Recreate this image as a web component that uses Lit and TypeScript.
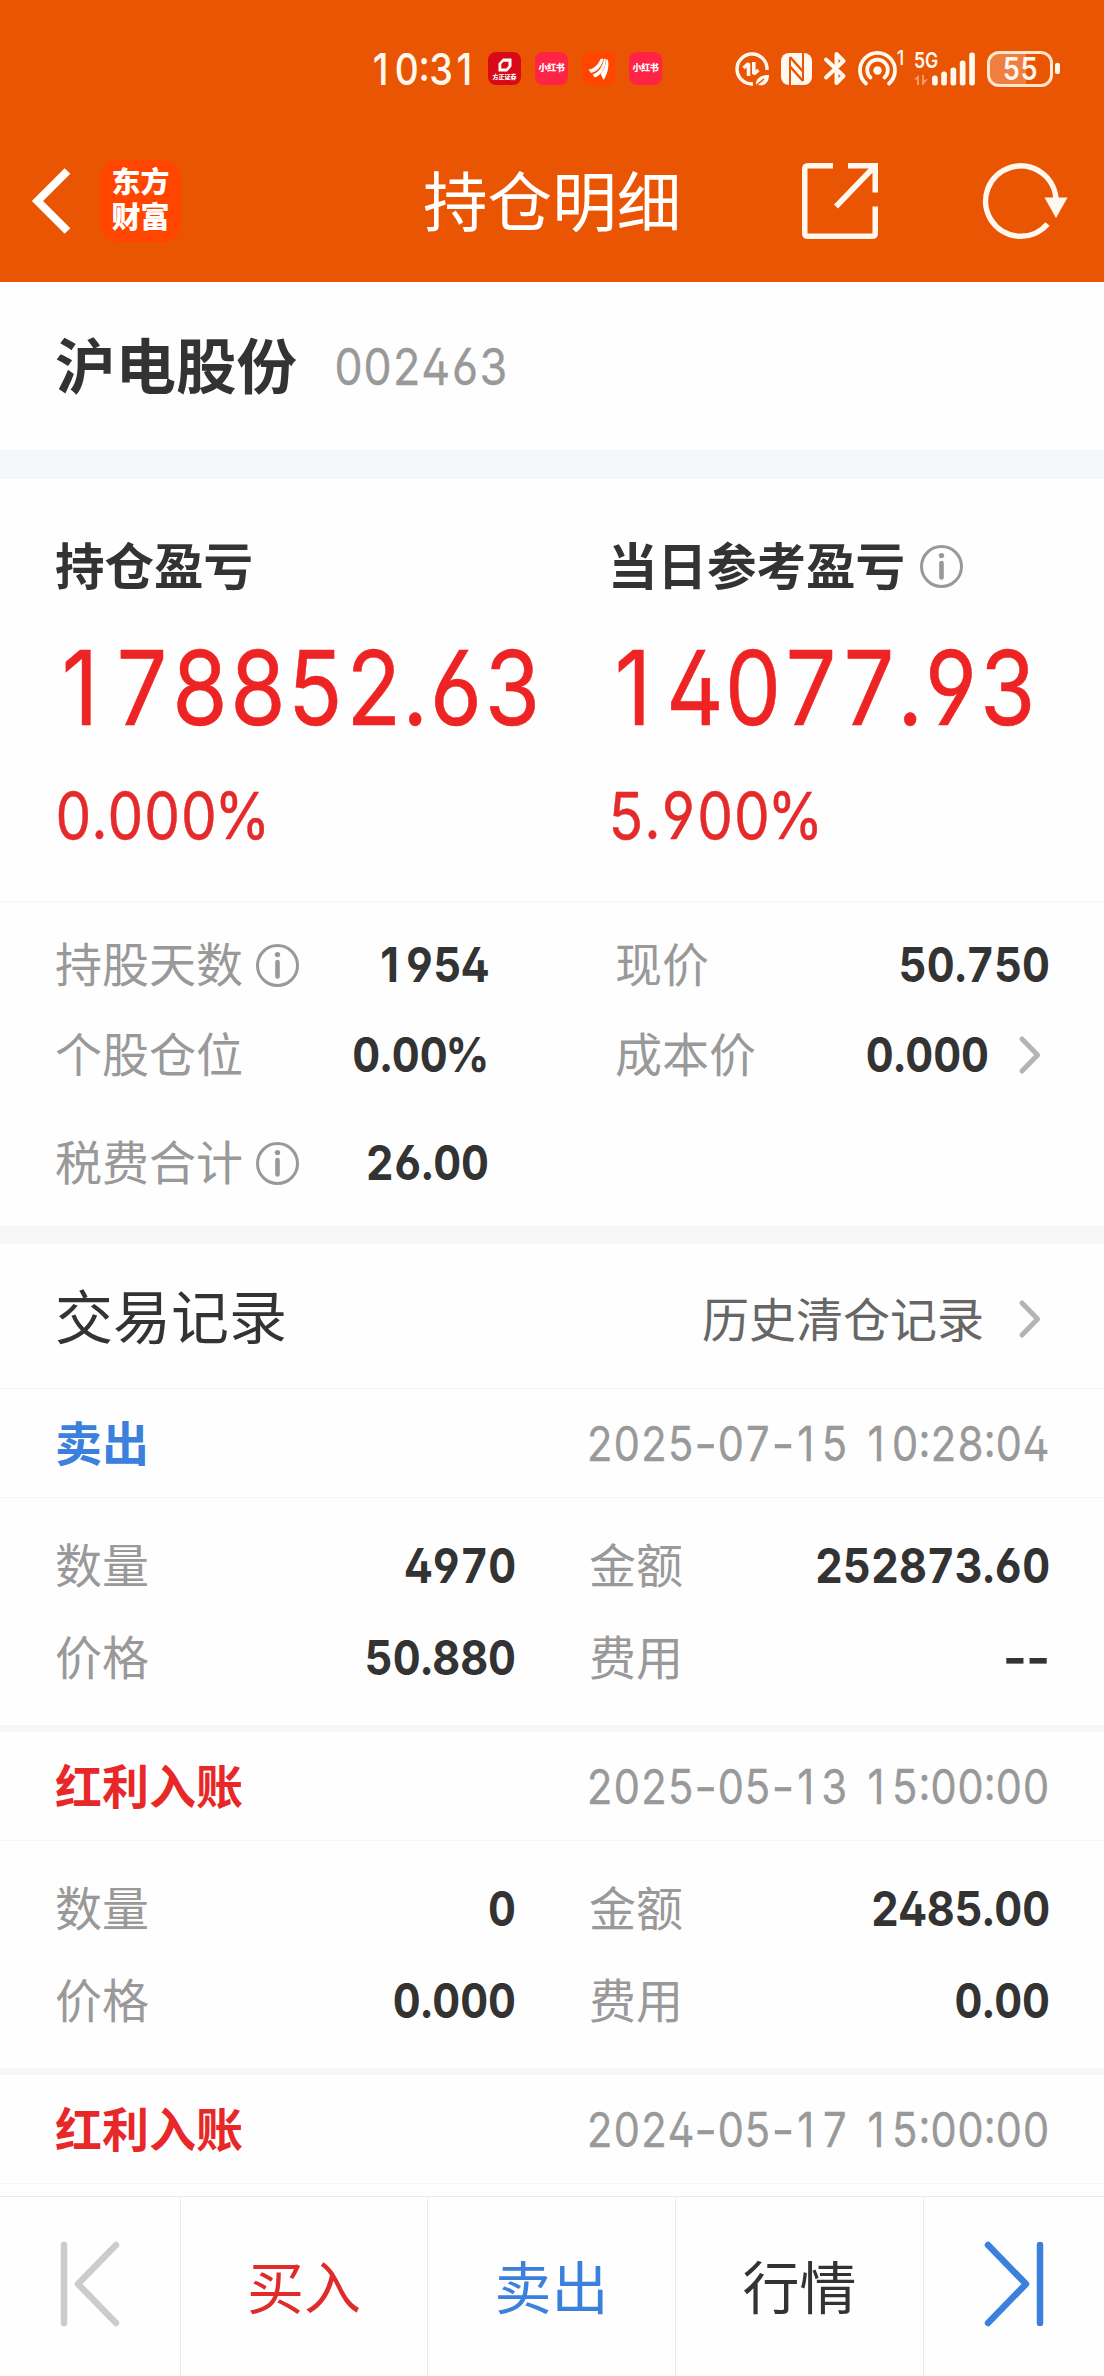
import { LitElement, html, css, svg, nothing } from "lit";
import { customElement, property } from "lit/decorators.js";

const shared = css`
  * { box-sizing: border-box; }
  svg { display: block; flex: none; overflow: visible; }
  .num {
    display: inline-block;
    white-space: nowrap;
    font-feature-settings: "tnum", "cv02", "cv03", "cv04";
    transform: scaleX(0.872);
    transform-origin: left center;
  }
  .num.end { transform-origin: right center; }
  .num i { font-style: normal; display: inline-block; text-align: center; font-feature-settings: normal; }
  .one { width: 0.65em; padding-right: 0.09em; }
  .dash { width: 0.54em; transform: scaleX(1.2); }
  .num .pc { font-feature-settings: "tnum"; margin-left: -0.05em; }
`;

/* Digits share one cell width; "1", "-" and "%" take their own glyph settings. */
const figures = (text: string) =>
  Array.from(text).map((c) =>
    c === "1" ? html`<i class="one">1</i>` : c === "-" ? html`<i class="dash">-</i>` : c === "%" ? html`<i class="pc">%</i>` : c,
  );

const infoIcon = html`<svg width="43" height="43" viewBox="0 0 43 43" fill="none">
  <circle cx="21.5" cy="21.5" r="20" stroke="#999" stroke-width="3" />
  <circle cx="21.5" cy="10.6" r="2.7" fill="#999" />
  <path d="M21.5 18V32.5" stroke="#999" stroke-width="4.6" stroke-linecap="round" />
</svg>`;

const chevron = html`<svg width="22" height="38" viewBox="0 0 22 38" fill="none">
  <path d="M3 3L18.6 19L3 35" stroke="#b4b4b4" stroke-width="5" stroke-linecap="round" stroke-linejoin="round" />
</svg>`;

@customElement("status-bar")
class StatusBar extends LitElement {
  static styles = [shared, css`
    :host { display: flex; align-items: center; height: 137px; padding: 0 44px 0 370px; color: #fff8ee; }
    .time { font-size: 43.5px; font-weight: 500; width: 118px; line-height: 60px; }
    .time.num { transform: scaleX(0.87); }
    .app {
      width: 33px; height: 33px; margin-right: 14px; border-radius: 8px; flex: none; color: #fff;
      display: flex; flex-direction: column; align-items: center; justify-content: center;
      white-space: nowrap; overflow: hidden;
    }
    .founder { background: #d80a18; }
    .founder span { font-size: 6px; line-height: 7px; font-weight: 900; margin-top: 1px; }
    .red { background: #ff2345; font-size: 9px; font-weight: 900; letter-spacing: -0.3px; }
    .east { background: #ff4500; }
    .right { display: flex; align-items: center; margin-left: auto; }
    .gap { margin-left: 12px; }
    .net { display: flex; height: 36px; }
    .slot { font-size: 20px; line-height: 20px; width: 17px; height: 35px; transform: translate(-1px, -3px) scaleX(.9); font-weight: 500; }
    .gen { width: 26px; display: flex; flex-direction: column; }
    .gen b { font-size: 22px; line-height: 18px; font-weight: 600; transform: scaleX(0.8); transform-origin: left; }
    .gen svg { margin-top: 6px; }
    .signal { margin-left: -8px; }
    .battery {
      width: 66px; height: 36px; border: 3px solid #ffe6cc; border-radius: 12px; margin-left: 12px;
      background: linear-gradient(90deg, #f07e40 0 39px, transparent 39px);
      font-size: 31.5px; font-weight: 600; line-height: 30px;
      display: flex; justify-content: center; background-origin: border-box;
    }
    .battery .num { transform-origin: center; transform: scaleX(.86); }
    .cap { width: 5px; height: 11px; border-radius: 2px; background: #fff8ee; margin-left: 2px; }
  `];

  render() {
    return html`
      <span class="time num">${figures("10:31")}</span>
      <div class="app founder">
        <svg width="14" height="14" viewBox="0 0 14 14"><path d="M5 .5H13.5V8.5L9 13.5H.5V5.5ZM5.5 3.8L3.3 6V10.5H8L10.5 8V3.8Z" fill="#fff" fill-rule="evenodd" /></svg>
        <span>方正证券</span>
      </div>
      <div class="app red">小红书</div>
      <div class="app east">
        <svg width="21" height="22" viewBox="0 0 21 22" fill="#fff">
          <path d="M.5 11.500C5 11.500 10 7 12.500 1L15.300 .5C15 7 9 14 3 15Z" />
          <path d="M4.500 16.800C11 14 15 8 15.900 1L17.700 .8C18.300 8 14 17 7 19.500Z" />
          <path d="M12.500 15.500C16.500 12 18 6 18.400 1L20 2C21.500 9 19 17 15.500 22Z" />
        </svg>
      </div>
      <div class="app red">小红书</div>
      <div class="right">
        <svg width="34" height="34" viewBox="0 0 34 34" fill="none" stroke="#fff8ee">
          <path d="M18 32A15 15 0 1 1 32 18" stroke-width="3.400" />
          <path d="M8.500 16L13.500 11.500V24M18.800 10V22L23.500 18" stroke-width="3.600" stroke-linejoin="bevel" />
          <path d="M21 33C20.500 26 26 23 34 23C34 30 30 34.500 24 33Z" fill="#fff8ee" stroke="none" />
          <path d="M20.500 34L29 27" stroke="#ea5504" stroke-width="1.500" />
        </svg>
        <svg class="gap" width="31" height="32" viewBox="0 0 31 32">
          <rect width="31" height="32" rx="8" fill="#fff8ee" />
          <path d="M9 4V32M22 0V28" stroke="#ea5504" stroke-width="2" />
          <path d="M9 4L22 18.500M9 13.500L22 28" fill="none" stroke="#ea5504" stroke-width="2.400" />
        </svg>
        <svg class="gap" width="22" height="35" viewBox="0 0 22 35" fill="none">
          <path d="M2 8.500L19.500 25L12.500 32V3L19.500 10L2 26.500" stroke="#fff8ee" stroke-width="4" stroke-linecap="round" stroke-linejoin="round" />
        </svg>
        <svg class="gap" width="39" height="35" viewBox="0 0 39 35" fill="none" stroke="#fff8ee" stroke-linecap="round">
          <path d="M8 32.500A17.500 17.500 0 1 1 31 32.500" stroke-width="3.800" />
          <path d="M12.500 26.500A10.300 10.300 0 1 1 26.500 26.500" stroke-width="3.800" />
          <circle cx="19.500" cy="19.500" r="4.200" fill="#fff8ee" stroke="none" />
        </svg>
        <div class="net">
          <span class="slot">1</span>
          <div class="gen">
            <b>5G</b>
            <svg width="14" height="10" viewBox="0 0 14 10"><path d="M0 4L5 0V10H3V5ZM8 0H10V5L14 4L9 10H8Z" fill="#f79a66" /></svg>
          </div>
        </div>
        <svg class="signal" width="43" height="34" viewBox="0 0 43 34" fill="#fff8ee">
          ${[[0, 10], [9.2, 14], [18.5, 18], [27.8, 25], [37.2, 33]].map(([x, h]) => svg`<rect x=${x} y=${33.5 - h} width="5.700" height=${h} rx="2.500" />`)}
        </svg>
        <div class="battery"><span class="num">55</span></div>
        <span class="cap"></span>
      </div>
    `;
  }
}

@customElement("nav-header")
class NavHeader extends LitElement {
  static styles = [shared, css`
    :host { display: grid; grid-template-columns: 423px 1fr auto; align-items: center; height: 128px; padding-right: 36px; color: #fff; }
    .left { display: flex; align-items: center; padding-left: 32px; }
    .badge {
      width: 81px; height: 82px; margin-left: 29px; border-radius: 18px; background: #ff4500;
      font-size: 29px; line-height: 34.5px; font-weight: 900; text-align: center; padding-top: 6px;
    }
    .title { font-size: 64.6px; line-height: 80px; white-space: nowrap; padding-top: 4px; }
    .actions { display: flex; align-items: center; gap: 105px; }
  `];

  render() {
    return html`
      <div class="left">
        <svg width="39" height="66" viewBox="0 0 39 66" fill="none"><path d="M35.500 3L5.500 33L35.500 63" stroke="#fff" stroke-width="8" stroke-linejoin="miter" /></svg>
        <div class="badge">东方<br />财富</div>
      </div>
      <span class="title">持仓明细</span>
      <div class="actions">
        <svg width="76" height="76" viewBox="0 0 76 76" fill="none" stroke="#fff8ee" stroke-width="5.500">
          <path d="M31 2.750H6Q2.750 2.750 2.750 6V70Q2.750 73.250 6 73.250H70Q73.250 73.250 73.250 70V43.500" />
          <path d="M46 2.750H73.250V29.500M73 3L34 43.500" />
        </svg>
        <svg width="85" height="76" viewBox="0 0 85 76" fill="none">
          <path d="M64.500 61A35.200 35.200 0 1 1 73 38V34" stroke="#fff8ee" stroke-width="5.500" />
          <path d="M61.500 34.500H84.500L73 55Z" fill="#fff8ee" />
        </svg>
      </div>
    `;
  }
}

@customElement("pair-row")
class PairRow extends LitElement {
  @property() label = "";
  @property() value = "";
  @property({ type: Boolean }) info = false;
  @property({ type: Boolean }) link = false;

  static styles = [shared, css`
    :host { display: flex; align-items: center; height: 60px; line-height: 60px; }
    .label { font-size: 47px; color: #999; margin-right: 13px; white-space: nowrap; }
    .value { font-size: 48px; font-weight: 700; color: #333; margin-left: auto; }
    .value.num { transform: scaleX(0.9); }
    .more { padding: 0 9px 0 30px; }
  `];

  render() {
    return html`
      <span class="label">${this.label}</span>
      ${this.info ? infoIcon : nothing}
      <span class="value num end">${figures(this.value)}</span>
      ${this.link ? html`<span class="more">${chevron}</span>` : nothing}
    `;
  }
}

@customElement("trade-record")
class TradeRecord extends LitElement {
  @property() kind = "";
  @property() tone = "";
  @property() time = "";
  @property({ attribute: false }) cells: string[][] = [];

  static styles = [shared, css`
    :host { display: block; flex: none; }
    .head { display: flex; align-items: center; justify-content: space-between; height: 109px; padding: 0 54px 0 55px; border-bottom: 1px solid #f5f5f7; }
    .kind { font-size: 47px; font-weight: 700; padding-top: 2px; }
    .sell { color: #3a80dc; }
    .bonus { color: #e82828; }
    .time { font-size: 47.5px; word-spacing: 5.5px; -webkit-text-stroke: 0.3px currentColor; color: #999; }
    .time.num { transform: scaleX(0.88); }
    .body { display: grid; grid-template-columns: 461px 461px; column-gap: 73px; row-gap: 32px; padding: 38px 54px 37px 55px; border-bottom: 7px solid #f6f7f9; }
  `];

  render() {
    return html`
      <div class="head">
        <span class="kind ${this.tone}">${this.kind}</span>
        <span class="time num end">${figures(this.time)}</span>
      </div>
      ${this.cells.length
        ? html`<div class="body">${this.cells.map(([l, v]) => html`<pair-row label=${l} value=${v}></pair-row>`)}</div>`
        : nothing}
    `;
  }
}

@customElement("app-root")
class AppRoot extends LitElement {
  static styles = [shared, css`
    :host {
      display: flex; flex-direction: column; width: 1104px; height: 2376px; overflow: hidden;
      background: #fefefe; color: #333; font-family: Inter, "Noto Sans CJK SC", sans-serif; line-height: 1.2;
    }
    .top { background: #ea5504; height: 282px; flex: none; }
    .content { flex: 1; min-height: 0; overflow: hidden; display: flex; flex-direction: column; }
    .stock { display: flex; align-items: center; height: 168px; padding: 2px 55px 0; flex: none; }
    .name { font-size: 60.5px; font-weight: 700; padding-top: 1px; }
    .code { font-size: 51px; color: #999; margin-left: 37px; -webkit-text-stroke: 0.3px currentColor; }
    .code.num { transform: scaleX(0.88); }
    .band { flex: none; background: #f6f7f9; height: 18px; }
    .band.tall { height: 29px; }
    .summary { display: grid; grid-template-columns: 553px 1fr; padding: 57px 0 0 55px; height: 423px; border-bottom: 1px solid #f5f5f7; flex: none; }
    .title { display: flex; align-items: center; gap: 15px; height: 60px; font-size: 49.5px; font-weight: 700; }
    .title span { padding-top: 4px; }
    .big { font-size: 102.5px; line-height: 120px; margin-top: 32px; -webkit-text-stroke: 0.6px currentColor; color: #ee2424; }
    .pct { font-size: 65px; line-height: 70px; margin-top: 33px; -webkit-text-stroke: 0.5px currentColor; color: #e42a2a; }
    .details { display: grid; grid-template-columns: 434px 435px; column-gap: 126px; padding: 33px 54px 33px 55px; flex: none; }
    .details pair-row { margin-bottom: 30px; }
    .details pair-row:last-child { margin: 18px 0 0; }
    .section { display: flex; align-items: center; justify-content: space-between; height: 145px; padding: 0 63px 0 55px; border-bottom: 1px solid #f5f5f7; flex: none; }
    .section h2 { margin: 0; padding-top: 5px; font-size: 58px; font-weight: 400; }
    .history { display: flex; align-items: center; gap: 35px; font-size: 47px; color: #666; padding-top: 6px; }
    .history span { padding-top: 2px; }
    .tabs { display: grid; grid-template-columns: 181px 247px 248px 248px 180px; height: 180px; border-top: 1px solid #e9e9e9; flex: none; }
    .tab { display: flex; align-items: center; justify-content: center; font-size: 57px; border-right: 1px solid #ececec; padding-top: 5px; }
    .tab:last-child { border: 0; }
    .buy { color: #e02b2b; }
    .sell { color: #3a80dc; }
    .tab.arrow { padding: 0 0 6px; }
  `];

  render() {
    return html`
      <div class="top"><status-bar></status-bar><nav-header></nav-header></div>
      <div class="content">
        <div class="stock"><span class="name">沪电股份</span><span class="code num">002463</span></div>
        <div class="band tall"></div>
        <div class="summary">
          <div>
            <div class="title"><span>持仓盈亏</span></div>
            <div><span class="big num">${figures("178852.63")}</span></div>
            <div><span class="pct num">${figures("0.000%")}</span></div>
          </div>
          <div>
            <div class="title"><span>当日参考盈亏</span>${infoIcon}</div>
            <div><span class="big num">${figures("14077.93")}</span></div>
            <div><span class="pct num">${figures("5.900%")}</span></div>
          </div>
        </div>
        <div class="details">
          <pair-row label="持股天数" value="1954" info></pair-row>
          <pair-row label="现价" value="50.750"></pair-row>
          <pair-row label="个股仓位" value="0.00%"></pair-row>
          <pair-row label="成本价" value="0.000" link></pair-row>
          <pair-row label="税费合计" value="26.00" info></pair-row>
        </div>
        <div class="band"></div>
        <div class="section"><h2>交易记录</h2><div class="history"><span>历史清仓记录</span>${chevron}</div></div>
        <trade-record kind="卖出" tone="sell" time="2025-07-15 10:28:04"
          .cells=${[["数量", "4970"], ["金额", "252873.60"], ["价格", "50.880"], ["费用", "--"]]}></trade-record>
        <trade-record kind="红利入账" tone="bonus" time="2025-05-13 15:00:00"
          .cells=${[["数量", "0"], ["金额", "2485.00"], ["价格", "0.000"], ["费用", "0.00"]]}></trade-record>
        <trade-record kind="红利入账" tone="bonus" time="2024-05-17 15:00:00"></trade-record>
      </div>
      <div class="tabs">
        <div class="tab arrow">
          <svg width="60" height="86" viewBox="0 0 60 86" fill="none" stroke="#ccc" stroke-width="6.500" stroke-linecap="round" stroke-linejoin="round"><path d="M4 4V82M56 4L18 43L56 82" /></svg>
        </div>
        <div class="tab buy">买入</div>
        <div class="tab sell">卖出</div>
        <div class="tab">行情</div>
        <div class="tab arrow">
          <svg width="60" height="86" viewBox="0 0 60 86" fill="none" stroke="#3a80dc" stroke-width="6.500" stroke-linecap="round" stroke-linejoin="round"><path d="M56 4V82M4 4L42 43L4 82" /></svg>
        </div>
      </div>
    `;
  }
}
